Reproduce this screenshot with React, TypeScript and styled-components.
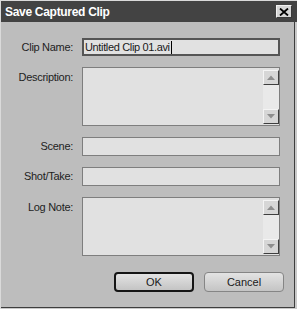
import React from "react";
import styled, { createGlobalStyle } from "styled-components";

const GlobalStyle = createGlobalStyle`
    html, body {
        margin: 0;
        padding: 0;
        background: #bdbdbd;
    }
    body {
        font-family: "Liberation Sans", Arial, sans-serif;
    }
`;

const Frame = styled.div`
    width: 297px;
    height: 309px;
    box-sizing: border-box;
    background: #bdbdbd;
    border-top: 1px solid #dadada;
    border-left: 1px solid #dadada;
    box-shadow: inset -2px -1px 0 #c9c9c9, inset -3px -2px 0 #3e3e3e;
    display: flex;
    flex-direction: column;
`;

const TitleBar = styled.div`
    height: 21px;
    background: #434343;
    display: flex;
    align-items: center;
    justify-content: space-between;
    padding: 0 5px 0 4px;
    box-sizing: border-box;
`;

const Title = styled.span`
    color: #ffffff;
    font-weight: bold;
    font-size: 12px;
    letter-spacing: -0.3px;
`;

const CloseButton = styled.div`
    width: 16px;
    height: 13px;
    box-sizing: border-box;
    background: #d6d6d6;
    border: 1px solid;
    border-color: #f2f2f2 #3a3a3a #3a3a3a #f2f2f2;
    display: flex;
    align-items: center;
    justify-content: center;
`;

const Body = styled.div`
    padding: 16px 0 0 8px;
`;

const Form = styled.div`
    display: grid;
    grid-template-columns: 64px 198px;
    column-gap: 9px;
    row-gap: 11px;
`;

const Label = styled.div<{ $top?: boolean }>`
    font-size: 11px;
    line-height: 13px;
    letter-spacing: -0.3px;
    color: #1e1e1e;
    text-align: right;
    white-space: nowrap;
    align-self: ${(p) => (p.$top ? "start" : "center")};
    padding-top: ${(p) => (p.$top ? "4px" : "0")};
`;

const Field = styled.div<{ $active?: boolean; $h: number }>`
    height: ${(p) => p.$h}px;
    box-sizing: border-box;
    background: #e1e1e1;
    border: ${(p) => (p.$active ? "2px solid #555555" : "1px solid #7e7e7e")};
    display: flex;
    align-items: center;
    padding-left: 1px;
    font-size: 11px;
    letter-spacing: -0.35px;
    color: #1a1a1a;
    white-space: nowrap;
`;

const Caret = styled.span`
    display: inline-block;
    width: 1px;
    height: 13px;
    background: #000;
    margin-left: 1px;
`;

const Area = styled.div<{ $h: number }>`
    height: ${(p) => p.$h}px;
    box-sizing: border-box;
    background: #e1e1e1;
    border: 1px solid #7e7e7e;
    display: flex;
    justify-content: flex-end;
    padding: 2px 0 1px 0;
`;

const ScrollBar = styled.div`
    width: 16px;
    display: flex;
    flex-direction: column;
    background: #e9e9e9;
`;

const ScrollTrack = styled.div`
    flex: 1;
`;

const ScrollButton = styled.div`
    height: 15px;
    box-sizing: border-box;
    background: #d6d6d6;
    border: 1px solid;
    border-color: #f4f4f4 #3e3e3e #3e3e3e #f4f4f4;
    display: flex;
    align-items: center;
    justify-content: center;
`;

const Buttons = styled.div`
    display: flex;
    justify-content: flex-end;
    gap: 10px;
    margin-top: 16px;
    padding-right: 13px;
`;

const Button = styled.div<{ $default?: boolean }>`
    width: 80px;
    height: 20px;
    box-sizing: border-box;
    border-radius: 4px;
    border: ${(p) => (p.$default ? "2px solid #151515" : "1px solid #858585")};
    background: linear-gradient(#e3e3e3, #c4c4c4);
    display: flex;
    align-items: center;
    justify-content: center;
    font-size: 11px;
    color: #1a1a1a;
`;

const Arrow: React.FC<{ down?: boolean }> = ({ down }) => (
    <svg width="8" height="5" viewBox="0 0 8 5">
        <polygon points={down ? "0,0 8,0 4,4.5" : "0,5 8,5 4,0.5"} fill="#8e8e8e" />
    </svg>
);

const TextArea: React.FC = () => (
    <Area $h={59}>
        <ScrollBar>
            <ScrollButton>
                <Arrow />
            </ScrollButton>
            <ScrollTrack />
            <ScrollButton>
                <Arrow down />
            </ScrollButton>
        </ScrollBar>
    </Area>
);

const App: React.FC = () => (
    <>
        <GlobalStyle />
        <Frame>
            <TitleBar>
                <Title>Save Captured Clip</Title>
                <CloseButton>
                    <svg width="10" height="8" viewBox="0 0 10 8">
                        <path d="M1 0.5 L9 7.5 M9 0.5 L1 7.5" stroke="#000" strokeWidth="1.8" />
                    </svg>
                </CloseButton>
            </TitleBar>
            <Body>
                <Form>
                    <Label>Clip Name:</Label>
                    <Field $active $h={18}>
                        Untitled Clip 01.avi
                        <Caret />
                    </Field>
                    <Label $top>Description:</Label>
                    <TextArea />
                    <Label>Scene:</Label>
                    <Field $h={19} />
                    <Label>Shot/Take:</Label>
                    <Field $h={19} />
                    <Label $top>Log Note:</Label>
                    <TextArea />
                </Form>
                <Buttons>
                    <Button $default>OK</Button>
                    <Button>Cancel</Button>
                </Buttons>
            </Body>
        </Frame>
    </>
);

export default App;
